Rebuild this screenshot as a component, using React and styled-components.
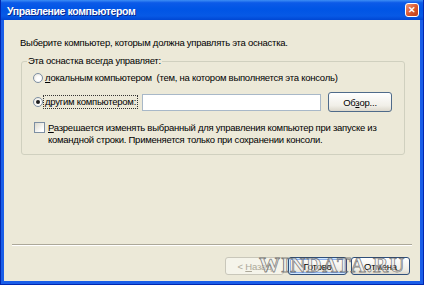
import React from 'react';
import styled, { createGlobalStyle } from 'styled-components';

const GlobalStyle = createGlobalStyle`
  html, body {
    margin: 0;
    padding: 0;
    background: #ece9d8;
  }
  body {
    font-family: "Liberation Sans", Arial, sans-serif;
  }
`;

function App() {
  return (
    <>
      <GlobalStyle />
      <Window>
        <TitleBar>
          <Title>Управление компьютером</Title>
          <CloseButton>✕</CloseButton>
        </TitleBar>
        <Client>
          <Intro>Выберите компьютер, которым должна управлять эта оснастка.</Intro>
          <GroupBox>
            <Legend>Эта оснастка всегда управляет:</Legend>
            <Row>
              <Radio />
              <Label>
                <u>л</u>окальным компьютером&nbsp; (тем, на котором выполняется эта консоль)
              </Label>
            </Row>
            <Row tall>
              <Radio checked />
              <Label focused>
                <u>д</u>ругим компьютером:
              </Label>
              <TextInput />
              <BrowseButton>
                Об<u>з</u>ор...
              </BrowseButton>
            </Row>
            <CheckRow>
              <CheckBox />
              <Label>
                <u>Р</u>азрешается изменять выбранный для управления компьютер при запуске из
                <br />
                командной строки. Применяется только при сохранении консоли.
              </Label>
            </CheckRow>
          </GroupBox>
          <Separator />
          <ButtonRow>
            <WizardButton disabled>
              &lt; <u>Н</u>азад
            </WizardButton>
            <WizardButton primary>Готово</WizardButton>
            <WizardButton>Отмена</WizardButton>
          </ButtonRow>
        </Client>
        <Watermark>WINDATA.RU</Watermark>
      </Window>
    </>
  );
}

const Window = styled.div`
  position: relative;
  width: 424px;
  height: 285px;
  box-sizing: border-box;
  display: flex;
  flex-direction: column;
  background: #1a5ee8;
  border: 1px solid #0027b0;
  border-top: none;
  padding: 0 3px 3px;
  overflow: hidden;
`;

const TitleBar = styled.div`
  height: 20px;
  margin: 0 -3px;
  padding: 0 4px 0 6px;
  display: flex;
  align-items: center;
  justify-content: space-between;
  background: linear-gradient(
    to bottom,
    #3d8ef5 0%,
    #0c5ae8 14%,
    #0055e5 45%,
    #0759e6 80%,
    #0047d3 100%
  );
`;

const Title = styled.span`
  color: #fff;
  font-weight: bold;
  font-size: 10.5px;
  letter-spacing: -0.4px;
  text-shadow: 1px 1px 0 #0c2a8c;
  padding-top: 1px;
`;

const CloseButton = styled.div`
  width: 14px;
  height: 14px;
  box-sizing: border-box;
  border: 1px solid #fff;
  border-radius: 3px;
  background: linear-gradient(135deg, #f09a7a 0%, #d9582f 50%, #c03d18 100%);
  color: #fff;
  font-size: 9px;
  font-weight: bold;
  display: flex;
  align-items: center;
  justify-content: center;
  line-height: 1;
`;

const Client = styled.div`
  flex: 1;
  display: flex;
  flex-direction: column;
  background: #ece9d8;
  padding: 17px 8px 6px;
  font-size: 9.5px;
  letter-spacing: -0.25px;
  color: #000;
`;

const Intro = styled.div`
  margin: 0 0 6px 8px;
  line-height: 12px;
  white-space: nowrap;
`;

const GroupBox = styled.fieldset`
  margin: 0 7px 0 9px;
  padding: 4px 10px 7px 11px;
  border: 1px solid #d0d0bf;
  border-radius: 3px;
  min-width: 0;
  display: flex;
  flex-direction: column;
`;

const Legend = styled.legend`
  padding: 0 1px;
  margin-left: -6px;
  line-height: 12px;
  color: #000;
`;

const Row = styled.div`
  display: flex;
  align-items: center;
  height: ${(p) => (p.tall ? '20px' : '14px')};
  margin-top: ${(p) => (p.tall ? '7px' : '0')};
  white-space: nowrap;
`;

const CheckRow = styled.div`
  display: flex;
  align-items: flex-start;
  margin-top: 9px;
  line-height: 12px;
  white-space: nowrap;
`;

const Radio = styled.span`
  position: relative;
  flex: none;
  width: 10px;
  height: 10px;
  box-sizing: border-box;
  border-radius: 50%;
  border: 1px solid #7d8fa3;
  background: radial-gradient(circle at 60% 60%, #ffffff 30%, #e2ded2 100%);
  margin-right: 2px;
  &::after {
    content: '';
    display: ${(p) => (p.checked ? 'block' : 'none')};
    position: absolute;
    left: 2px;
    top: 2px;
    width: 4px;
    height: 4px;
    border-radius: 50%;
    background: #1e1e1e;
  }
`;

const CheckBox = styled.span`
  flex: none;
  width: 11px;
  height: 11px;
  box-sizing: border-box;
  margin: 1px 3px 0 1px;
  border: 1px solid #7d8fa3;
  background: linear-gradient(135deg, #dcd9cc 0%, #ffffff 80%);
`;

const Label = styled.span`
  line-height: 12px;
  padding: 0 1px;
  border: 1px dotted ${(p) => (p.focused ? '#333' : 'transparent')};
  margin-left: -2px;
  u {
    text-decoration: underline;
  }
`;

const TextInput = styled.div`
  width: 179px;
  height: 17px;
  box-sizing: border-box;
  margin-left: 4px;
  background: #fff;
  border: 1px solid #a8b8c8;
`;

const BrowseButton = styled.button`
  width: 64px;
  height: 20px;
  margin-left: 7px;
  padding: 0;
  border: 1px solid #4f6b8a;
  border-radius: 3px;
  background: linear-gradient(to bottom, #ffffff 0%, #f1efe8 70%, #dcd8cc 100%);
  font-family: "Liberation Sans", Arial, sans-serif;
  font-size: 9.5px;
  letter-spacing: -0.2px;
  color: #000;
`;

const Separator = styled.div`
  margin-top: auto;
  border-top: 1px solid #aca899;
  border-bottom: 1px solid #fff;
`;

const ButtonRow = styled.div`
  display: flex;
  justify-content: flex-end;
  gap: 4px;
  margin-top: 11px;
  padding-right: 2px;
`;

const WizardButton = styled.button`
  width: 59px;
  height: 18px;
  padding: 0;
  box-sizing: border-box;
  border-radius: 3px;
  font-family: "Liberation Sans", Arial, sans-serif;
  font-size: 9.5px;
  letter-spacing: -0.2px;
  border: 1px solid ${(p) => (p.disabled ? '#c9c7ba' : '#2f4f7a')};
  color: ${(p) => (p.disabled ? '#aca899' : '#000')};
  background: ${(p) =>
    p.disabled
      ? '#f5f4ea'
      : 'linear-gradient(to bottom, #ffffff 0%, #f1efe8 70%, #dcd8cc 100%)'};
  box-shadow: ${(p) =>
    p.primary ? 'inset 0 0 0 1px #cee7ff, inset 0 0 0 2px #8fb0e8' : 'none'};
`;

const Watermark = styled.div`
  position: absolute;
  left: 258px;
  top: 253px;
  font-family: "Liberation Serif", "Times New Roman", serif;
  font-weight: bold;
  font-size: 21px;
  letter-spacing: 1px;
  color: rgba(235, 235, 235, 0.55);
  -webkit-text-stroke: 0.8px rgba(70, 70, 70, 0.65);
  pointer-events: none;
`;

export default App;
